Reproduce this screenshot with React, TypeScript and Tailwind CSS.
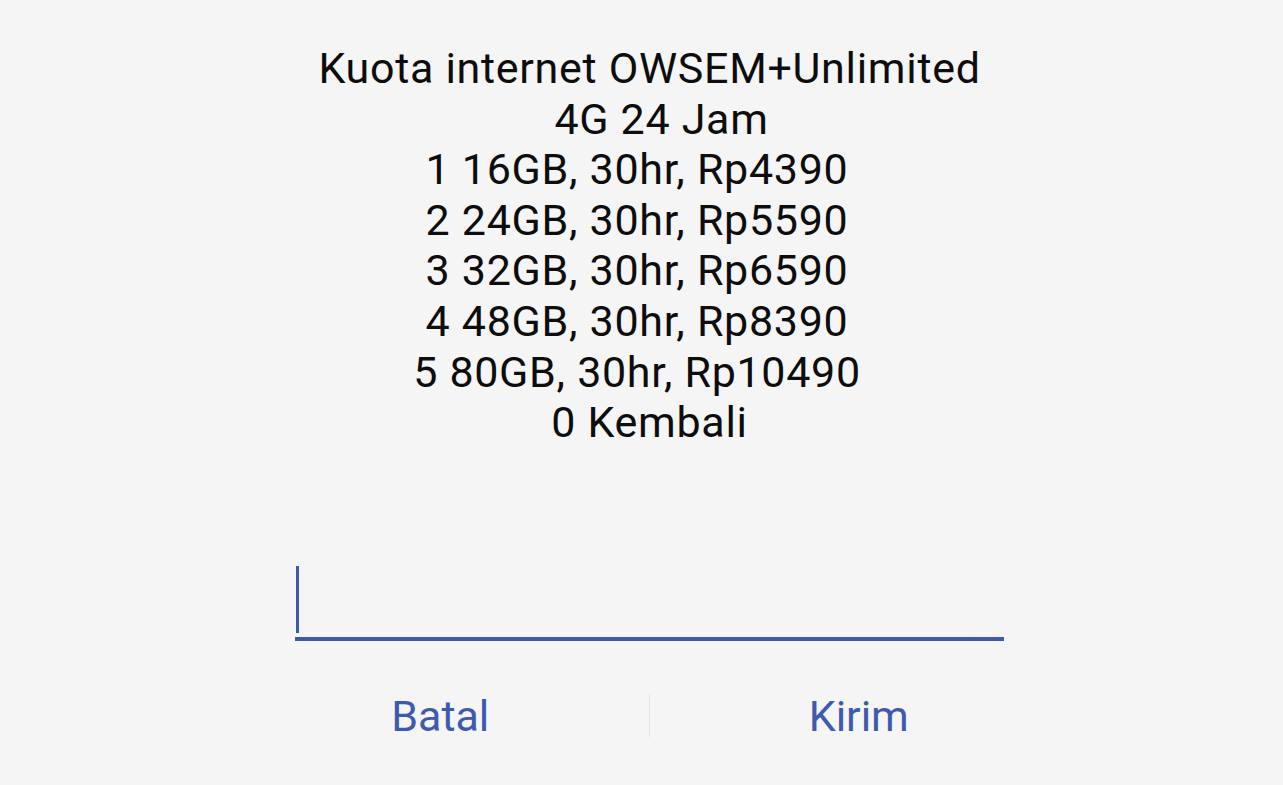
import React from "react";

const lines: { t: string; cls: string }[] = [
  { t: "Kuota internet OWSEM+Unlimited", cls: "" },
  { t: "4G 24 Jam", cls: "pl-[24px]" },
  { t: "1 16GB, 30hr, Rp4390", cls: "pr-[25px]" },
  { t: "2 24GB, 30hr, Rp5590", cls: "pr-[25px]" },
  { t: "3 32GB, 30hr, Rp6590", cls: "pr-[25px]" },
  { t: "4 48GB, 30hr, Rp8390", cls: "pr-[25px]" },
  { t: "5 80GB, 30hr, Rp10490", cls: "pr-[25px]" },
  { t: "0 Kembali", cls: "" },
];

export default function App() {
  return (
    <div
      className="w-[1283px] h-[785px] bg-[#f5f5f5] pl-[16px] flex flex-col items-center overflow-hidden"
      style={{ fontFamily: "Roboto, 'Noto Sans', sans-serif" }}
    >
      <div className="pt-[43px] flex flex-col items-center text-[43px] tracking-[0.7px] leading-[50.6px] text-[#0d0d0d]">
        {lines.map((l) => (
          <div key={l.t} className={l.cls}>
            {l.t}
          </div>
        ))}
      </div>
      <div className="mt-[118px] w-[709px] flex flex-col">
        <div className="ml-[1px] w-[3px] h-[67px] bg-[#3d5ab0]" />
        <div className="mt-[4px] h-[4px] w-full bg-[#3d5ab0]" />
      </div>
      <div className="mt-[51px] w-[836px] flex items-center">
        <div className="flex-1 flex justify-center text-[43px] text-[#3d5ab0] leading-[48px]">Batal</div>
        <div className="w-[1px] h-[43px] bg-[#e4e4e4]" />
        <div className="flex-1 flex justify-center text-[43px] text-[#3d5ab0] leading-[48px]">Kirim</div>
      </div>
    </div>
  );
}
